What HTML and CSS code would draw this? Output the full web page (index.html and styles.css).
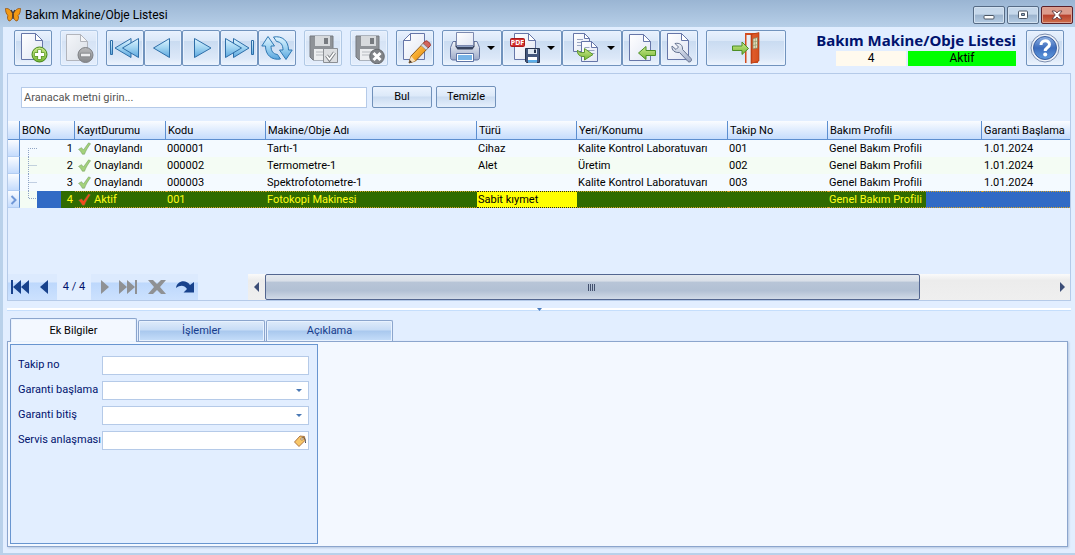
FILE: index.html
```html
<!DOCTYPE html>
<html lang="tr">
<head>
<meta charset="utf-8">
<meta name="viewport" content="width=device-width, initial-scale=1">
<title>Bakım Makine/Obje Listesi</title>
<link rel="stylesheet" href="styles.css">
</head>
<body>
<svg class="defs" width="0" height="0" aria-hidden="true">
  <defs>
    <linearGradient id="paper" x1="0" y1="0" x2="1" y2="1"><stop offset="0" stop-color="#fff"/><stop offset="1" stop-color="#e1e6f4"/></linearGradient>
    <linearGradient id="paperGray" x1="0" y1="0" x2="1" y2="1"><stop offset="0" stop-color="#f4f6fa"/><stop offset="1" stop-color="#dadfe6"/></linearGradient>
    <linearGradient id="blue" x1="0" y1="0" x2="0" y2="1"><stop offset="0" stop-color="#dff4ff"/><stop offset=".5" stop-color="#9fd3f1"/><stop offset="1" stop-color="#5ba6de"/></linearGradient>
    <linearGradient id="green" x1="0" y1="0" x2="0" y2="1"><stop offset="0" stop-color="#cdeb8c"/><stop offset="1" stop-color="#74b534"/></linearGradient>
    <linearGradient id="gray" x1="0" y1="0" x2="0" y2="1"><stop offset="0" stop-color="#b9babc"/><stop offset="1" stop-color="#85878a"/></linearGradient>
    <linearGradient id="steel" x1="0" y1="0" x2="0" y2="1"><stop offset="0" stop-color="#f2f5fa"/><stop offset="1" stop-color="#9ba8c6"/></linearGradient>
    <linearGradient id="help" x1="0" y1="0" x2="0" y2="1"><stop offset="0" stop-color="#90b1e2"/><stop offset=".5" stop-color="#3c6cbd"/><stop offset="1" stop-color="#5f9bdf"/></linearGradient>
    <linearGradient id="door" x1="0" y1="0" x2="1" y2="0"><stop offset="0" stop-color="#c03c12"/><stop offset=".25" stop-color="#e05b2a"/><stop offset="1" stop-color="#d4501f"/></linearGradient>
    <linearGradient id="pencil" x1="0" y1="0" x2="1" y2="1"><stop offset="0" stop-color="#ffe08a"/><stop offset=".5" stop-color="#f6a92b"/><stop offset="1" stop-color="#c66d0c"/></linearGradient>
    <symbol id="tick" viewBox="0 0 12 12"><path d="M.5 6.800 3.300 5.200 5 7.300 9.800.8 11.600 1.600C9.300 4.500 7.500 7.500 6 11.300H4C3 9.500 2 8 .5 6.800Z" fill="currentColor" stroke="#53803f" stroke-opacity=".6" stroke-width=".6"/></symbol>
    <symbol id="floppy" viewBox="0 0 32 32"><path d="M3 4h23v24H6l-3-3Z" fill="#8f9398" stroke="#777b80"/><path d="M8 4h15v10H8Z" fill="#d7dadd"/><path d="M17 6h4v6h-4Z" fill="#777b80"/><path d="M7 17h16v11H7Z" fill="#eceef0"/><path d="M9 20h12M9 23h12" stroke="#b6babf"/></symbol>
  </defs>
</svg>

<div class="window">
  <header class="titlebar">
    <svg class="logo" width="16" height="14" viewBox="0 0 16 14"><path d="M7.500 5.500C5.500 1 2 0 .5.500c0 3 .8 6 2.500 7-1 2-.5 4 1 5.500 2 0 3-2 3.500-4ZM8.500 5.500c2-4.500 5.500-5.500 7-5 0 3-.8 6-2.500 7 1 2 .5 4-1 5.500-2 0-3-2-3.500-4Z" fill="#f39a16" stroke="#94510c" stroke-width=".8"/><path d="M8 4v7M6 2 8 5l2-3" stroke="#3c3330" stroke-width="1.200" fill="none"/></svg>
    <span class="caption">Bakım Makine/Obje Listesi</span>
    <div class="window-buttons">
      <button class="winbtn" aria-label="Simge durumuna küçült"><svg width="12" height="12" viewBox="0 0 12 12"><rect x="1" y="6.500" width="10" height="3.500" rx="1" fill="#fff" stroke="#4c5765"/></svg></button>
      <button class="winbtn" aria-label="Ekranı kapla"><svg width="12" height="12" viewBox="0 0 12 12"><rect x="1.500" y="2" width="9" height="7.500" rx="1" fill="#fff" stroke="#4c5765"/><path d="M4.500 4.500h3v2h-3Z" fill="#8fa9c5" stroke="#4c5765"/></svg></button>
      <button class="winbtn winbtn-close" aria-label="Kapat"><svg width="12" height="12" viewBox="0 0 12 12"><path d="M1 2h3.200L6 4 7.800 2H11L7.800 6l3.200 4H7.800L6 8l-1.800 2H1l3.200-4Z" fill="#fff" stroke="#5e3b3f" stroke-width=".9"/></svg></button>
    </div>
  </header>

  <div class="toolbar">
    <div class="tools">
      <button class="tool" aria-label="Yeni"><svg width="32" height="32" viewBox="0 0 32 32"><path d="M4.500 1.500h14l7 7v19h-21Z" fill="url(#paper)" stroke="#6676a8"/><path d="M18.500 1.500v7h7Z" fill="#fff" stroke="#6676a8"/><circle cx="22.500" cy="22.500" r="7.500" fill="url(#green)" stroke="#45861b"/><path d="M22.500 17.500v10M17.500 22.500h10" stroke="#5b9428" stroke-width="4.400"/><path d="M22.500 18v9M18 22.500h9" stroke="#fff" stroke-width="2.800"/></svg></button>
      <button class="tool tool-off" disabled aria-label="Sil"><svg width="32" height="32" viewBox="0 0 32 32"><path d="M3.500 2.500h14l7 7v19h-21Z" fill="url(#paperGray)" stroke="#b2b5bc"/><path d="M17.500 2.500v7h7Z" fill="#f5f6f8" stroke="#b2b5bc"/><circle cx="22.500" cy="23" r="7.500" fill="url(#gray)" stroke="#7e8084"/><path d="M17.500 23h10" stroke="#787a7e" stroke-width="4.400"/><path d="M18 23h9" stroke="#ecedef" stroke-width="2.800"/></svg></button>
      <div class="group">
        <button class="tool" aria-label="İlk kayıt"><svg width="32" height="32" viewBox="0 0 32 32"><g fill="url(#blue)" stroke="#2e6ea8"><path d="M1.500 8.500h2v14h-2Z"/><path d="M22 6.500v19L6 16Z"/><path d="M29.500 6.500v19L13.500 16Z"/></g></svg></button>
        <button class="tool" aria-label="Önceki kayıt"><svg width="32" height="32" viewBox="0 0 32 32"><path d="M22.500 6.500v19L6.500 16Z" fill="url(#blue)" stroke="#2e6ea8"/></svg></button>
        <button class="tool" aria-label="Sonraki kayıt"><svg width="32" height="32" viewBox="0 0 32 32"><path d="M9.500 6.500v19L26 16Z" fill="url(#blue)" stroke="#2e6ea8"/></svg></button>
        <button class="tool" aria-label="Son kayıt"><svg width="32" height="32" viewBox="0 0 32 32"><g fill="url(#blue)" stroke="#2e6ea8"><path d="M28.500 8.500h2v14h-2Z"/><path d="M10.500 6.500v19L26 16Z"/><path d="M2.500 6.500v19L18.500 16Z"/></g></svg></button>
        <button class="tool" aria-label="Yenile"><svg width="32" height="32" viewBox="0 0 32 32"><g fill="url(#blue)" stroke="#2f78b3" stroke-linejoin="round"><path d="M7 4.500 13.500 14H10c0 5 2 8 6.500 8.500l3 4.500c-9 1.500-15-4-15-13H.8Z"/><path d="M25 27.500 18.500 18H22c0-5-2-8-6.500-8.500l-3-4.500c9-1.500 15 4 15 13h3.700Z"/></g></svg></button>
      </div>
      <button class="tool tool-off" disabled aria-label="Kaydet"><svg width="32" height="32" viewBox="0 0 32 32"><use href="#floppy" width="32" height="32"/><path d="M16.500 16.500h14v14h-14Z" fill="#dcdee1" stroke="#8b8f94"/><path d="m19.500 23.500 3 4 5-7" fill="none" stroke="#7d8186" stroke-width="3.400"/><path d="m19.500 23.500 3 4 5-7" fill="none" stroke="#fff" stroke-width="1.600"/></svg></button>
      <button class="tool tool-off" disabled aria-label="Vazgeç"><svg width="32" height="32" viewBox="0 0 32 32"><use href="#floppy" width="32" height="32"/><circle cx="24" cy="24.500" r="7.300" fill="#808387" stroke="#686b6f"/><path d="m20.500 21 7 7m0-7-7 7" stroke="#fff" stroke-width="3"/></svg></button>
      <button class="tool" aria-label="Düzenle"><svg width="32" height="32" viewBox="0 0 32 32"><path d="M11.500 1.500h14v26h-21v-19Z" fill="url(#paper)" stroke="#6676a8"/><path d="M11.500 1.500v7h-7Z" fill="#fff" stroke="#6676a8"/><path d="m10 31 2-7L26 9.500l5 4.500-14.500 15Z" fill="url(#pencil)" stroke="#8d5a1c"/><path d="m24 11.500 2.500-2.500c1.500-.8 5 2 5 4.500L29 16Z" fill="#d2655b" stroke="#9c3630"/><path d="m22 13.500 2-2 5 4.500-2 2Z" fill="#d8dce5" stroke="#7e8189" stroke-width=".6"/><path d="m10 31 2-7 4.500 5Z" fill="#f7dfb9"/><path d="m10 31 .8-3 2.300 2.200Z" fill="#3c2c23"/></svg></button>
      <div class="group">
        <button class="tool tool-menu" aria-label="Yazdır"><svg width="32" height="32" viewBox="0 0 32 32"><path d="M4 9.500h24l2.500 6v10c0 1.500-1 2.500-2.500 2.500H4c-1.500 0-2.500-1-2.500-2.500v-10Z" fill="url(#steel)" stroke="#6575a1"/><path d="M6.500 9.500h19v5l-2 3h-15l-2-3Z" fill="#37435f"/><path d="M7.500.500h17v13h-17Z" fill="url(#paper)" stroke="#7d8ab0"/><path d="M8 14.500h16" stroke="#8fa1c5"/><path d="M7.500 21.500h17v8h-17Z" fill="#fff" stroke="#5e74a5"/><path d="M9 23h14v5H9Z" fill="#78b4e7"/></svg><i class="caret"></i></button>
        <button class="tool tool-menu" aria-label="PDF olarak kaydet"><svg width="32" height="32" viewBox="0 0 32 32"><path d="M5.500 1.500h14l7 7v19h-21Z" fill="url(#paper)" stroke="#6676a8"/><path d="M19.500 1.500v7h7Z" fill="#fff" stroke="#6676a8"/><rect x="1.500" y="6.500" width="14" height="8" rx="1" fill="#d12f2d" stroke="#a7191b"/><text class="pdf-text" x="8.500" y="13">PDF</text><path d="M16.500 16.500h14v14h-13l-1-1Z" fill="#43567c" stroke="#26344f"/><path d="M19 17h9v5h-9Z" fill="#dee7f1"/><path d="M25 17.500h2v3.500h-2Z" fill="#26344f"/><path d="M19 25h9v5.500h-9Z" fill="#fff"/><path d="M19 28h9v2.500h-9Z" fill="#5baee9"/></svg><i class="caret"></i></button>
        <button class="tool tool-menu" aria-label="Kopyala"><svg width="32" height="32" viewBox="0 0 32 32"><path d="M4.500 1.500h11l5 5v13h-16Z" fill="url(#paper)" stroke="#6676a8"/><path d="M15.500 1.500v5h5Z" fill="#fff" stroke="#6676a8"/><path d="M8 7.500h6m-6 3h9m-9 3h9" stroke="#9aa5c1"/><path d="M12.500 9.500h10l6 6v14h-16Z" fill="url(#paper)" stroke="#6676a8"/><path d="M22.500 9.500v6h6Z" fill="#fff" stroke="#6676a8"/><path d="M15.500 15.500h5m-5 3h10m-3 3h3" stroke="#9aa5c1"/><path d="M8.500 18c1 2 3 3 7 2.500v-4l8.500 6-8.500 5.500v-3.500C11 25 8 22.500 8.500 18Z" fill="url(#green)" stroke="#5b962a"/></svg><i class="caret"></i></button>
        <button class="tool" aria-label="Aktar"><svg width="32" height="32" viewBox="0 0 32 32"><path d="M4.500 2.500h14l7 7v19h-21Z" fill="url(#paper)" stroke="#6676a8"/><path d="M18.500 2.500v7h7Z" fill="#fff" stroke="#6676a8"/><path d="M13.500 21 21 14.500v4h9.500v5H21v4Z" fill="url(#green)" stroke="#4c8e25"/></svg></button>
        <button class="tool" aria-label="Ayarlar"><svg width="32" height="32" viewBox="0 0 32 32"><path d="M4.500 1.500h14l7 7v19h-21Z" fill="url(#paper)" stroke="#6676a8"/><path d="M18.500 1.500v7h7Z" fill="#fff" stroke="#6676a8"/><path d="M12 11.500c4.500-1 8 1.500 7.500 6l8.500 9c1.500 2-1 4.500-3 3l-8.500-9c-4.500.5-8-2-7.500-6.500l4 3.500 2.500-2.500Z" fill="url(#steel)" stroke="#64728f"/></svg></button>
      </div>
      <button class="tool tool-exit" aria-label="Çıkış"><svg width="32" height="32" viewBox="0 0 32 32"><path d="M15 1h13v30H15Z" fill="#d34b1d"/><path d="M16.500 3H22v28h-5.500Z" fill="#e8edf5"/><path d="m21 2.500 8-2V29l-8 2.500Z" fill="url(#door)" stroke="#a9370f" stroke-width=".6"/><path d="m23 6.500 4.500-1V16L23 17Z" fill="#e8e2c0" stroke="#8d7a58" stroke-width=".8"/><path d="M25.300 6v10.500M23 10l4.500-.8M23 13.500l4.500-.8" stroke="#8d9a6b" stroke-width=".7"/><path d="M2.500 14H12v-4l6.500 6.500L12 22.500v-4H2.500Z" fill="url(#green)" stroke="#4c8e25"/></svg></button>
    </div>
    <div class="status">
      <h1 class="status-title">Bakım Makine/Obje Listesi</h1>
      <div class="status-row"><span class="status-no">4</span><span class="status-state">Aktif</span></div>
    </div>
    <button class="tool" aria-label="Yardım"><svg width="32" height="32" viewBox="0 0 32 32"><circle cx="16" cy="16" r="14" fill="#eef2f9" stroke="#7b8dae"/><circle cx="16" cy="16" r="11.500" fill="url(#help)" stroke="#3b5f9f"/><path d="M12 13c0-5.500 8.500-5.500 8.500-.5 0 3-4.300 3-4.300 6.500" fill="none" stroke="#fff" stroke-width="3"/><circle cx="16.200" cy="22.500" r="2" fill="#fff"/></svg></button>
  </div>

  <section class="list">
    <form class="search">
      <input class="search-box" type="text" aria-label="Arama metni" placeholder="Aranacak metni girin...">
      <button class="btn" type="button">Bul</button>
      <button class="btn" type="button">Temizle</button>
    </form>
    <div class="grid-wrap">
      <table class="grid">
        <colgroup><col class="c-mark"><col class="c-no"><col class="c-state"><col class="c-code"><col class="c-name"><col class="c-kind"><col class="c-place"><col class="c-track"><col class="c-profile"><col></colgroup>
        <thead><tr><th></th><th>BONo</th><th>KayıtDurumu</th><th>Kodu</th><th>Makine/Obje Adı</th><th>Türü</th><th>Yeri/Konumu</th><th>Takip No</th><th>Bakım Profili</th><th>Garanti Başlama</th></tr></thead>
        <tbody>
          <tr><td class="mark"></td><td><div class="node"><svg width="17" height="17" viewBox="0 0 17 17"><path class="tree" d="M8.500 17V8.500H17"/></svg>1</div></td><td><div class="state"><svg class="ok" width="13" height="13"><use href="#tick"/></svg>Onaylandı</div></td><td>000001</td><td>Tartı-1</td><td>Cihaz</td><td>Kalite Kontrol Laboratuvarı</td><td>001</td><td>Genel Bakım Profili</td><td class="date">1.01.2024</td></tr>
          <tr><td class="mark"></td><td><div class="node"><svg width="17" height="17" viewBox="0 0 17 17"><path class="tree" d="M8.500 0V17M8.500 8.500H17"/></svg>2</div></td><td><div class="state"><svg class="ok" width="13" height="13"><use href="#tick"/></svg>Onaylandı</div></td><td>000002</td><td>Termometre-1</td><td>Alet</td><td>Üretim</td><td>002</td><td>Genel Bakım Profili</td><td class="date">1.01.2024</td></tr>
          <tr><td class="mark"></td><td><div class="node"><svg width="17" height="17" viewBox="0 0 17 17"><path class="tree" d="M8.500 0V17M8.500 8.500H17"/></svg>3</div></td><td><div class="state"><svg class="ok" width="13" height="13"><use href="#tick"/></svg>Onaylandı</div></td><td>000003</td><td>Spektrofotometre-1</td><td></td><td>Kalite Kontrol Laboratuvarı</td><td>003</td><td>Genel Bakım Profili</td><td class="date">1.01.2024</td></tr>
          <tr class="selected"><td class="mark"><svg width="11" height="15" viewBox="0 0 11 15"><path d="m3.500 4 4 4-4 4" fill="none" stroke="#7098d8" stroke-width="2"/></svg></td><td class="first"><div class="node"><svg width="17" height="17" viewBox="0 0 17 17"><path class="tree" d="M8.500 0V7.500H17"/></svg>4</div></td><td><div class="state"><svg class="active" width="13" height="13"><use href="#tick"/></svg>Aktif</div></td><td>001</td><td>Fotokopi Makinesi</td><td class="focused">Sabit kıymet</td><td></td><td></td><td class="fade">Genel Bakım Profili</td><td class="rest"></td></tr>
        </tbody>
      </table>
    </div>
    <div class="footer">
      <nav class="pager">
        <button aria-label="İlk"><svg width="20" height="14" viewBox="0 0 20 14"><path d="M1 0h2v14H1ZM11 0v14L3 7ZM19 0v14L11 7Z" fill="#18428c"/></svg></button>
        <button aria-label="Önceki"><svg width="10" height="14" viewBox="0 0 10 14"><path d="M9 0v14L1 7Z" fill="#18428c"/></svg></button>
        <span class="pages">4 / 4</span>
        <button disabled aria-label="Sonraki"><svg width="10" height="14" viewBox="0 0 10 14"><path d="M1 0v14l8-7Z" fill="#8f9194"/></svg></button>
        <button disabled aria-label="Son"><svg width="20" height="14" viewBox="0 0 20 14"><path d="M17 0h2v14h-2ZM9 0v14l8-7ZM1 0v14l8-7Z" fill="#8f9194"/></svg></button>
        <button disabled aria-label="İptal"><svg width="20" height="14" viewBox="0 0 20 14"><path d="M1 0h5l4 4 4-4h5l-6 7 6 7h-5l-4-4-4 4H1l6-7Z" fill="#8f9194"/></svg></button>
        <button aria-label="Yinele"><svg width="20" height="14" viewBox="0 0 20 14"><path d="M1 8C2 .500 11-1 15 5l4-3v10.500H8.500L12 9C9 4.500 5 5 1 8Z" fill="#18428c"/></svg></button>
      </nav>
      <div class="scroll">
        <button aria-label="Sola kaydır"><svg width="7" height="10" viewBox="0 0 7 10"><path d="M6 0v10L1 5Z" fill="#3b4d77"/></svg></button>
        <div class="track"><div class="thumb"><svg width="8" height="7" viewBox="0 0 8 7"><path d="M.5 0v7M2.500 0v7M4.500 0v7M6.500 0v7" stroke="#43506d"/></svg></div></div>
        <button aria-label="Sağa kaydır"><svg width="7" height="10" viewBox="0 0 7 10"><path d="M1 0v10l5-5Z" fill="#3b4d77"/></svg></button>
      </div>
    </div>
  </section>

  <div class="splitter"><svg width="5" height="3" viewBox="0 0 5 3"><path d="M0 0h5L2.500 3Z" fill="#4a7dc0"/></svg></div>

  <section class="detail">
    <div class="tabs" role="tablist">
      <button class="tab tab-on" role="tab" aria-selected="true">Ek Bilgiler</button>
      <button class="tab" role="tab">İşlemler</button>
      <button class="tab" role="tab">Açıklama</button>
    </div>
    <div class="sheet">
      <form class="fields">
        <label for="takip">Takip no</label>
        <div class="field"><input id="takip" type="text"></div>
        <label for="baslama">Garanti başlama</label>
        <div class="field"><select id="baslama"><option></option></select><svg width="6" height="3" viewBox="0 0 6 3"><path d="M0 0h6L3 3Z" fill="#4a78b4"/></svg></div>
        <label for="bitis">Garanti bitiş</label>
        <div class="field"><select id="bitis"><option></option></select><svg width="6" height="3" viewBox="0 0 6 3"><path d="M0 0h6L3 3Z" fill="#4a78b4"/></svg></div>
        <label for="servis">Servis anlaşması</label>
        <div class="field"><input id="servis" type="text"><button class="pick" type="button" aria-label="Seç"><svg width="12" height="12" viewBox="0 0 12 12"><path d="M.5 7 6 1l4.500.5.500 4L5 11.500Z" fill="#f8c768" stroke="#a66a35" stroke-width=".9"/><path d="M8 4c.5-3.500 4-1 3.500 4" fill="none" stroke="#4e4a4d"/><circle cx="8" cy="4" r="1.200" fill="#fff" stroke="#805029" stroke-width=".6"/></svg></button></div>
      </form>
    </div>
  </section>
</div>
</body>
</html>
```
FILE: styles.css
```css
* { box-sizing: border-box; }

body {
  margin: 0;
  background: #e2eeff;
  color: #000;
  font: 11px/14px Roboto, "Noto Sans", sans-serif;
}

button, input, select { font: inherit; color: inherit; }
button { padding: 0; margin: 0; border: 0; background: none; }
svg { display: block; flex: none; }
.defs { position: absolute; }

.window {
  display: flex;
  flex-direction: column;
  min-height: 100vh;
  border: solid #b9d1ea;
  border-width: 0 0 2px 3px;
}

/* Title bar */
.titlebar {
  display: flex;
  align-items: center;
  height: 27px;
  margin-left: -3px;
  padding: 3px 2px 0 5px;
  gap: 4px;
  background: linear-gradient(#9ab5d3, #b7cfe8);
}
.caption { flex: 1; font-size: 12px; line-height: 16px; }
.window-buttons { display: flex; gap: 2px; }
.winbtn {
  display: grid;
  place-items: center;
  width: 32px;
  height: 18px;
  border: 1px solid #566b85;
  border-radius: 2px;
  background: linear-gradient(#c6d8eb 0 45%, #9bb3cd 50%, #b5cce4);
  box-shadow: inset 0 0 0 1px #d3e2f1;
}
.winbtn-close {
  border-color: #5c2029;
  background: linear-gradient(#dc9c8d 0 45%, #b7402c 50%, #cf6e4b);
  box-shadow: inset 0 0 0 1px #dda191;
}

/* Toolbar */
.toolbar {
  display: flex;
  align-items: flex-start;
  padding: 3px 11px 7px 11px;
}
.tools { display: flex; flex: 1; gap: 8px; }
.group { display: flex; }
.tool {
  display: flex;
  align-items: center;
  justify-content: center;
  width: 38px;
  height: 36px;
  border: 1px solid #7193bd;
  border-radius: 2px;
  background: linear-gradient(#e8f1fe, #dbe8f8 28%, #c9dbf1 29%, #dce8f8 80%, #edf4fd);
  box-shadow: inset 0 0 0 1px #e9f2fe;
}
.tool-off { border-color: #b1c9e5; background: linear-gradient(#e6effc, #dce8f8 28%, #d5e3f5 29%, #e4eefc); }
.tool-menu { width: 60px; justify-content: flex-start; padding-left: 6px; gap: 6px; }
.tool-exit { width: 80px; }
.caret { border: 4px solid transparent; border-top-color: #000; border-bottom: 0; }
.pdf-text { font: bold 7px "Noto Sans", sans-serif; fill: #fff; text-anchor: middle; }

.status { margin-right: 10px; }
.status-title {
  margin: 0;
  color: #00136e;
  font: bold 15px/21px "Noto Sans", "Open Sans", sans-serif;
  text-align: right;
}
.status-row { display: flex; justify-content: flex-end; gap: 2px; text-align: center; font-size: 12px; line-height: 15px; }
.status-no { width: 70px; background: #fffaee; }
.status-state { width: 108px; background: #0f0; }

/* Record list */
.list {
  display: flex;
  flex: 1;
  flex-direction: column;
  margin: 0 4px;
  border: 1px solid #b5cae8;
}
.search { display: flex; gap: 4px; padding: 12px 13px 13px; }
.search-box {
  width: 346px;
  height: 21px;
  margin: 1px 1px 0 0;
  padding: 0 2px;
  border: 1px solid #b5cae8;
  background: #fff;
}
.search-box::placeholder { color: #555; opacity: 1; }
.btn {
  width: 60px;
  height: 22px;
  border: 1px solid #7191ba;
  border-radius: 2px;
  background: linear-gradient(#ebf3fe, #dce9f9 45%, #cbdcf1 50%, #e5effc);
}
.grid-wrap { flex: 1; overflow: hidden; }
.grid {
  width: 100%;
  table-layout: fixed;
  border-collapse: separate;
  border-spacing: 0;
  white-space: nowrap;
}
.c-mark { width: 12px; }
.c-no { width: 55px; }
.c-state { width: 91px; }
.c-code, .c-kind, .c-track { width: 100px; }
.c-name { width: 211px; }
.c-place { width: 151px; }
.c-profile { width: 154px; }
.grid th {
  height: 19px;
  padding: 2px 0 0 2px;
  border-right: 1px solid #5c8ed0;
  border-bottom: 1px solid #5c8ed0;
  background: linear-gradient(#fafcff, #c5dcfd);
  font-weight: normal;
  line-height: 14px;
  text-align: left;
}
.grid th:last-child { border-right: 0; }
.grid td { height: 17px; padding: 0 0 0 1px; line-height: 17px; background: #f4faff; }
.grid tr:nth-child(even) td { background: #f4fcf4; }
.grid td.date { padding-left: 2px; }
.grid td.mark,
.grid tr:nth-child(even) td.mark {
  padding: 0;
  border-right: 1px solid #5c8ed0;
  border-bottom: 1px solid #b2cdf3;
  background: linear-gradient(#fafcff, #c5dcfd);
}
.node { display: flex; justify-content: space-between; height: 17px; margin-left: -1px; padding-right: 2px; }
.tree { fill: none; stroke: #8fa4c4; stroke-dasharray: 1 1; }
.state { display: flex; align-items: center; gap: 3px; height: 17px; padding-left: 2px; }
.ok { color: #a3d17c; }
.active { color: #f24a1c; }

.grid tr.selected td:not(.mark) {
  border: dotted #d3a02b;
  border-width: 1px 0;
  background: #306b00;
  color: #ffff1a;
  line-height: 15px;
}
.grid tr.selected .state { height: 15px; }
.grid tr.selected td.first:not(.mark) {
  border: 0;
  background: linear-gradient(90deg, #f4fcf4 17px, #316ac5 17px 41px, #306b00 41px);
  line-height: 17px;
}
.grid tr.selected td.focused:not(.mark) { border-color: #222; background: #ff0; color: #000; }
.grid tr.selected td.fade:not(.mark) { background: linear-gradient(90deg, #306b00 98px, #316ac5 98px); }
.grid tr.selected td.rest:not(.mark) { background: #316ac5; }

.footer { display: flex; gap: 50px; height: 26px; }
.pager {
  display: flex;
  width: 190px;
  align-items: center;
  justify-content: space-between;
  padding: 0 3px 0 2px;
  background: linear-gradient(#dceafe 0 30%, #bdd8fc 35%, #cce1fe);
}
.pages {
  align-self: stretch;
  width: 34px;
  background: #e2eeff;
  color: #00136e;
  line-height: 26px;
  text-align: center;
}
.scroll { display: flex; flex: 1; background: linear-gradient(#fafafa, #ececec 25%, #efefef); }
.scroll button { display: grid; place-items: center; width: 16px; }
.track { flex: 1; padding-left: 1px; }
.thumb {
  display: grid;
  place-items: center;
  width: 83%;
  height: 26px;
  border: 1px solid #536690;
  border-radius: 2px;
  background: linear-gradient(#e4e9ef, #d9dfe8 25%, #b8c5d7 30%, #b2c0d4 65%, #d1dae7);
}

.splitter {
  display: grid;
  justify-content: center;
  height: 4px;
  margin: 7px 4px 6px;
  background: linear-gradient(#fff 0 2px, #c5defc 2px 3px, transparent 3px);
}

/* Record details */
.detail { margin: 0 7px 6px 4px; }
.tabs { display: flex; align-items: flex-end; gap: 1px; padding-left: 3px; }
.tab {
  width: 127px;
  height: 21px;
  border: 1px solid #8ba5cd;
  border-bottom: 0;
  border-radius: 2px 2px 0 0;
  background: linear-gradient(#dfebfa, #c7dcf6 45%, #a9c8ee 50%, #c6defa);
  box-shadow: inset 0 0 0 1px #e8f2ff;
  color: #163c8c;
}
.tab-on { height: 24px; margin-bottom: -1px; background: #f3f8ff; color: #000; z-index: 1; }
.sheet {
  padding: 2px;
  border: 1px solid #8ba5cd;
  background: #f3f8ff;
  box-shadow: 1px 1px 2px #b5c6df;
}
.fields {
  display: grid;
  grid-template-columns: 84px 207px;
  grid-auto-rows: 19px;
  row-gap: 6px;
  width: 308px;
  min-height: 200px;
  padding: 11px 7px;
  border: 1px solid #6895d0;
  background: #e2eeff;
  color: #00136e;
  line-height: 18px;
  white-space: nowrap;
}
.field {
  display: flex;
  align-items: center;
  padding-right: 2px;
  border: 1px solid #b5cae8;
  background: #fff;
}
.field input, .field select {
  flex: 1;
  min-width: 0;
  height: 17px;
  padding: 0 2px;
  border: 0;
  background: none;
  appearance: none;
}
.field select + svg { margin-right: 4px; }
.pick { width: 12px; height: 12px; }
```
